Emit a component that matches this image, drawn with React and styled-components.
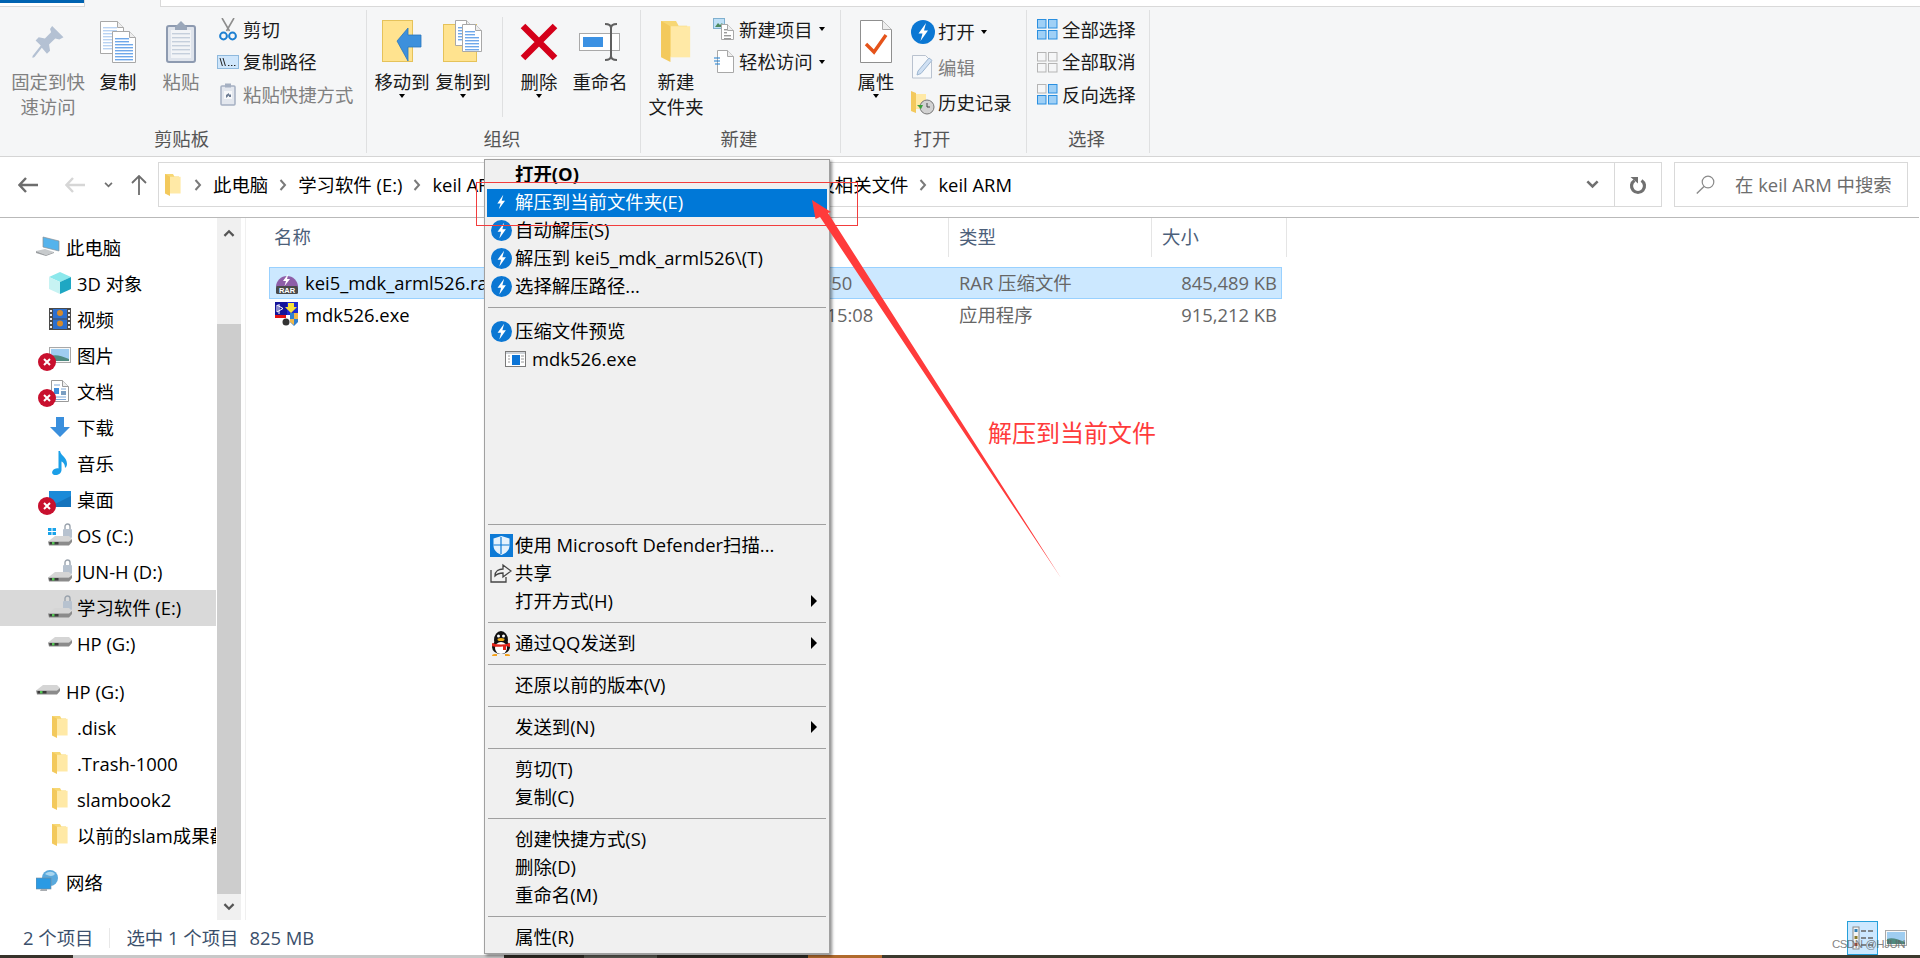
import React from 'react';
import styled, { createGlobalStyle } from 'styled-components';

const GlobalStyle = createGlobalStyle`
  html, body {
    margin: 0;
    padding: 0;
    background: #fff;
  }
  body {
    font-family: 'Open Sans', 'Noto Sans CJK SC', sans-serif;
    font-size: 18.4px;
    line-height: 25px;
    color: #000;
  }
`;

const Page = styled.div`
  position: relative;
  width: 1920px;
  height: 958px;
  overflow: hidden;
  display: flex;
  flex-direction: column;
`;

/* ribbon */
const TabStrip = styled.div`
  display: flex;
  height: 7px;
  flex: none;
`;
const FileTab = styled.div`
  width: 84px;
  border-top: 3px solid #0063b1;
  border-bottom: 1px solid #d9d9d9;
`;
const HomeTab = styled.div`
  width: 75px;
  background: #f5f6f7;
  border-right: 1px solid #d9d9d9;
  border-left: 1px solid #d9d9d9;
`;
const TabFill = styled.div`
  flex: 1;
  border-bottom: 1px solid #d9d9d9;
`;
const Ribbon = styled.div`
  display: flex;
  flex: none;
  height: 150px;
  padding-top: 3px;
  box-sizing: border-box;
  background: #f5f6f7;
  border-bottom: 1px solid #d5d5d5;
`;
const Group = styled.div`
  width: ${p => p.$width}px;
  height: 143px;
  flex: none;
  box-sizing: border-box;
  display: flex;
  flex-direction: column;
  border-right: 1px solid #dfe0e1;
`;
const GroupBody = styled.div`
  display: flex;
  flex: 1;
  min-height: 0;
  padding-left: ${p => p.$pad || 0}px;
`;
const GroupLabel = styled.div`
  height: 26px;
  flex: none;
  text-align: center;
  color: #555;
  line-height: 24px;
  padding-right: 3px;
`;
const LargeButton = styled.div`
  width: ${p => p.$width}px;
  flex: none;
  display: flex;
  flex-direction: column;
  align-items: center;
  padding-top: 10px;
  color: ${p => (p.$disabled ? '#808080' : '#1a1a1a')};
`;
const LargeIcon = styled.div`
  height: 43px;
  margin-bottom: 6px;
  display: flex;
  align-items: center;
  justify-content: center;
`;
const LargeText = styled.div`
  text-align: center;
  white-space: nowrap;
`;
const Caret = styled.span`
  display: block;
  width: 0;
  height: 0;
  border-left: 3.5px solid transparent;
  border-right: 3.5px solid transparent;
  border-top: 4px solid #000;
  margin-top: ${p => p.$top || 0}px;
  margin-left: ${p => p.$left || 0}px;
`;
const GroupRule = styled.div`
  width: 1px;
  height: 100px;
  margin: 7px 6px 0 7px;
  background: #dfe0e1;
`;
const SmallColumn = styled.div`
  margin-left: ${p => p.$left || 0}px;
  padding-top: ${p => p.$top || 3}px;
`;
const SmallRow = styled.div`
  height: ${p => p.$height || 32.5}px;
  display: flex;
  align-items: center;
  white-space: nowrap;
  color: ${p => (p.$disabled ? '#808080' : '#1a1a1a')};
`;
const SmallIcon = styled.span`
  width: 24px;
  margin-right: 3px;
  height: 24px;
  display: flex;
  align-items: center;
  justify-content: center;
  flex: none;
`;

/* address bar */
const AddressRow = styled.div`
  height: 61px;
  flex: none;
  box-sizing: border-box;
  display: flex;
  align-items: center;
  padding: 5px 0 10px;
  border-bottom: 1px solid #b9b9b9;
  margin-right: 1px;
`;
const NavButton = styled.div`
  width: ${p => p.$width}px;
  display: flex;
  justify-content: center;
  flex: none;
`;
const AddressBox = styled.div`
  width: 1504px;
  height: 45px;
  margin-left: 2px;
  box-sizing: border-box;
  border: 1px solid #d9d9d9;
  display: flex;
  align-items: center;
  padding-left: 4px;
`;
const CrumbIcon = styled.span`
  width: 20px;
  padding-left: 2px;
  box-sizing: border-box;
  display: flex;
  flex: none;
`;
const CrumbSep = styled.span`
  display: flex;
  margin: 0 11px;
`;
const LongCrumb = styled.span`
  display: flex;
  justify-content: space-between;
  width: 476px;
`;
const AddressEnd = styled.div`
  margin-left: auto;
  display: flex;
  align-items: center;
  height: 100%;
`;
const DropArrow = styled.span`
  display: flex;
  margin-right: 15px;
`;
const RefreshCell = styled.span`
  width: 46px;
  height: 100%;
  display: flex;
  align-items: center;
  justify-content: center;
  border-left: 1px solid #d9d9d9;
`;
const SearchBox = styled.div`
  width: 234px;
  height: 45px;
  margin-left: 12px;
  box-sizing: border-box;
  border: 1px solid #d9d9d9;
  display: flex;
  align-items: center;
  padding-left: 21px;
  color: #6d6d6d;
  white-space: nowrap;
`;
const SearchGlyph = styled.span`
  display: flex;
  width: 39px;
  flex: none;
`;

/* middle */
const Middle = styled.div`
  flex: 1;
  display: flex;
  min-height: 0;
`;
const Sidebar = styled.div`
  width: 217px;
  flex: none;
  padding-top: 12px;
  box-sizing: border-box;
  overflow: hidden;
`;
const TreeRow = styled.div`
  position: relative;
  height: 36px;
  width: 216px;
  box-sizing: border-box;
  display: flex;
  align-items: center;
  gap: ${p => (p.$top ? 6 : 5)}px;
  padding: 0 0 2px ${p => (p.$top ? 36 : 48)}px;
  margin-top: ${p => p.$gap || 0}px;
  background: ${p => (p.$active ? '#d9d9d9' : 'transparent')};
  white-space: nowrap;
  overflow: hidden;
`;
const TreeIcon = styled.span`
  width: 24px;
  height: 24px;
  display: flex;
  align-items: center;
  justify-content: center;
  flex: none;
`;
const ErrorBadge = styled.span`
  position: absolute;
  left: 38px;
  top: 15px;
  width: 18px;
  height: 18px;
  display: flex;
`;
const ScrollBar = styled.div`
  width: 24px;
  flex: none;
  display: flex;
  flex-direction: column;
  background: #f0f0f0;
`;
const ScrollEnd = styled.div`
  height: ${p => p.$height}px;
  flex: none;
  display: flex;
  justify-content: center;
  padding-top: ${p => p.$top}px;
  box-sizing: border-box;
`;
const ScrollThumb = styled.div`
  flex: 1;
  background: #cdcdcd;
`;
const PaneRule = styled.div`
  width: 1px;
  flex: none;
  margin-left: 4px;
  background: #f0f0f0;
`;
const FilePane = styled.div`
  flex: 1;
  padding-left: 23px;
  color: #666;
`;
const HeaderRow = styled.div`
  display: grid;
  grid-template-columns: 680px 203px 135px;
  height: 39px;
  color: #4c607a;
`;
const HeaderCell = styled.div`
  padding-left: ${p => p.$pad}px;
  padding-top: 6px;
  box-sizing: border-box;
  border-right: 1px solid #e5e5e5;
`;
const FileRow = styled.div`
  display: grid;
  grid-template-columns: 454px 225px 203px 130px;
  height: 32px;
  width: 1013px;
  box-sizing: border-box;
  padding-bottom: 2px;
  align-items: center;
  background: ${p => (p.$selected ? '#cce8ff' : 'transparent')};
  border: 1px solid ${p => (p.$selected ? '#99d1ff' : 'transparent')};
  margin-top: ${p => p.$gap || 0}px;
  white-space: nowrap;
`;
const NameCell = styled.div`
  display: flex;
  align-items: center;
  gap: 6px;
  padding-left: 5px;
  color: #000;
`;
const TypeCell = styled.div`
  padding-left: 10px;
`;
const SizeCell = styled.div`
  text-align: right;
  padding-right: 5px;
`;

/* status bar */
const StatusBar = styled.div`
  height: 35px;
  flex: none;
  display: flex;
  align-items: center;
  padding: 0 13px 0 23px;
  color: #3a4f6b;
  white-space: nowrap;
`;
const StatusRule = styled.span`
  width: 1px;
  height: 20px;
  background: #e8e8e8;
  margin: 0 16px;
`;
const StatusGap = styled.span`
  margin-left: 11px;
`;
const ViewActive = styled.div`
  margin-left: auto;
  width: 31px;
  height: 34px;
  box-sizing: border-box;
  background: #cce8ff;
  border: 1px solid #26a0da;
  display: flex;
  align-items: center;
  justify-content: center;
`;
const ViewPlain = styled.div`
  margin-left: 7px;
  display: flex;
`;
const DesktopStrip = styled.div`
  height: 3px;
  flex: none;
  display: flex;
`;
const StripPart = styled.div`
  width: ${p => p.$width}px;
  flex: ${p => (p.$width ? 'none' : 1)};
  background: ${p => p.$color};
`;

/* context menu */
const Menu = styled.div`
  position: absolute;
  left: 484px;
  top: 159px;
  width: 346px;
  height: 795px;
  box-sizing: border-box;
  padding: 1px 2px;
  background: #f0f0f0;
  border: 1px solid #a0a0a0;
  box-shadow: 2px 2px 3px rgba(0, 0, 0, 0.45);
`;
const MenuRow = styled.div`
  height: 28px;
  box-sizing: border-box;
  padding-bottom: 2px;
  display: flex;
  align-items: center;
  line-height: 26px;
  white-space: nowrap;
  background: ${p => (p.$active ? '#0078d7' : 'transparent')};
  color: ${p => (p.$active ? '#fff' : '#000')};
  font-weight: ${p => (p.$bold ? 700 : 400)};
`;
const MenuIcon = styled.span`
  width: 28px;
  height: 26px;
  flex: none;
  display: flex;
  align-items: center;
  justify-content: center;
`;
const SubIndent = styled.span`
  margin-left: ${p => p.$left}px;
  margin-right: 6px;
  display: flex;
`;
const SubArrow = styled.span`
  margin-left: auto;
  margin-right: 10px;
  width: 0;
  height: 0;
  border-top: 6px solid transparent;
  border-bottom: 6px solid transparent;
  border-left: 6px solid #000;
`;
const MenuRule = styled.div`
  height: 1px;
  margin: 6px 1px 7px;
  background: #a0a0a0;
`;
const MenuRuleTall = styled(MenuRule)`
  margin-bottom: 10px;
`;
const MenuSpacer = styled.div`
  height: 144px;
`;

/* annotations painted over the screenshot */
const RedBox = styled.div`
  position: absolute;
  left: 476px;
  top: 182px;
  width: 382px;
  height: 44px;
  box-sizing: border-box;
  border: 1px solid #f23d3d;
`;
const ArrowLayer = styled.svg`
  position: absolute;
  left: 0;
  top: 0;
  pointer-events: none;
`;
const Note = styled.div`
  position: absolute;
  left: 988px;
  top: 417px;
  font-size: 24px;
  line-height: 32px;
  color: #ff3b3b;
  white-space: nowrap;
`;
const Watermark = styled.div`
  position: absolute;
  right: 15px;
  top: 936px;
  font-family: 'Liberation Sans', sans-serif;
  font-size: 11.5px;
  line-height: 16px;
  letter-spacing: -0.5px;
  color: rgba(100, 100, 100, 0.8);
  white-space: nowrap;
`;

/* icons */
const Bolt = ({ size = 24, color = '#fff' }) => (
  <svg width={size} height={size} viewBox="0 0 24 24">
    <path d="M14.5 4 8 13.5h3.6L9.6 20 16.4 10.6h-3.7z" fill={color} />
  </svg>
);
const BoltCircle = ({ size = 21 }) => (
  <svg width={size} height={size} viewBox="0 0 24 24">
    <circle cx="12" cy="12" r="12" fill="#0b77d3" />
    <path d="M15 3 7.500 13.500h4L9.500 21 17 10.500h-4z" fill="#fff" />
  </svg>
);
const Sheet = ({ x, y, w, h, line = '#6fa8ea', rows = 0, stroke = '#a8a8a8', from = 5 }) => (
  <g>
    <path d={`M${x + 0.5} ${y + 0.5}h${w - 7}l6 6v${h - 7}h-${w - 1}z`} fill="#fff" stroke={stroke} />
    <path d={`M${x + w - 6.5} ${y + 0.5}v6h6`} fill="#eee" stroke={stroke} />
    {Array.from({ length: rows }, (_, i) => (
      <rect key={i} x={x + 3} y={y + from + i * 3} width={i < 2 ? w - 10 : w - 6} height="1.4" fill={line} />
    ))}
  </g>
);
const PinIcon = () => (
  <svg width="32" height="32" viewBox="0 0 30 31">
    <path d="M19 0 30 11l-4 2-4-1-6 6 1 6-3 3-5-6-7 9-2 1v-2l8-10-5-5 3-3 6 1 6-6-1-3z" fill="#b4c1d3" />
  </svg>
);
const CopyIcon = () => (
  <svg width="36" height="42" viewBox="0 0 36 42">
    <Sheet x={0} y={0} w={24} h={33} rows={8} from={6} line="#b9d3f3" />
    <Sheet x={12} y={10} w={24} h={32} rows={8} from={7} />
  </svg>
);
const PasteIcon = () => (
  <svg width="30" height="43" viewBox="0 0 30 43">
    <rect x="1" y="6" width="28" height="36" rx="2" fill="#dfe4ec" stroke="#8d9ab0" strokeWidth="2" />
    <rect x="5" y="10" width="20" height="28" fill="#f2f4f7" />
    {[13, 17, 21, 25, 29, 33].map(y => (
      <rect key={y} x="6" y={y} width="18" height="1.4" fill="#c5cfdc" />
    ))}
    <path d="M9 7l3-3 3-3 3 3 3 3v3H9z" fill="#9aa7ba" />
  </svg>
);
const ScissorsIcon = () => (
  <svg width="18" height="23" viewBox="0 0 18 23">
    <path d="M3 0l7.5 13M15 0 7.5 13" stroke="#8d8d8d" strokeWidth="1.6" fill="none" />
    <circle cx="4.5" cy="18" r="3.4" fill="none" stroke="#1d7fd1" strokeWidth="2" />
    <circle cx="13.5" cy="18" r="3.4" fill="none" stroke="#1d7fd1" strokeWidth="2" />
  </svg>
);
const CopyPathIcon = () => (
  <svg width="22" height="14" viewBox="0 0 22 14">
    <rect x="0.5" y="0.5" width="21" height="13" fill="#cfe6fb" stroke="#8fb9dd" />
    <path d="M3 3l2.4 8M6 3l2.4 8" stroke="#222" fill="none" />
    <path d="M11 10.5h1.4M14 10.5h1.4M17 10.5h1.4" stroke="#222" fill="none" />
  </svg>
);
const ShortcutIcon = () => (
  <svg width="16" height="23" viewBox="0 0 16 23">
    <rect x="1" y="3" width="14" height="19" rx="1" fill="#e3e7ee" stroke="#a5b0c2" strokeWidth="1.5" />
    <rect x="5" y="0.5" width="6" height="4" fill="#a5b0c2" />
    <rect x="4" y="8" width="8" height="8" fill="#f7f8fa" />
    <path d="M6 15v-3l3-2v1.4h2V14H9v-1.6z" fill="#6d7c93" />
  </svg>
);
const MoveToIcon = () => (
  <svg width="40" height="43" viewBox="0 0 40 43">
    <rect x="0.5" y="0.5" width="30" height="41" fill="#ffe38f" stroke="#e5c25a" />
    <path d="M15 20 26 7v7h13v12H26v14z" fill="#3d90dc" stroke="#2a76bd" strokeWidth="0.8" transform="translate(0 1)" />
  </svg>
);
const CopyToIcon = () => (
  <svg width="40" height="43" viewBox="0 0 40 43">
    <rect x="0.5" y="4.5" width="33" height="37" fill="#ffe38f" stroke="#e5c25a" />
    <Sheet x={12} y={0} w={18} h={26} rows={5} from={7} />
    <Sheet x={19} y={4} w={20} h={28} rows={7} from={7} />
  </svg>
);
const DeleteIcon = () => (
  <svg width="38" height="38" viewBox="0 0 38 38">
    <path d="M3 3l32 32M35 3 3 35" stroke="#d4001a" strokeWidth="6.5" fill="none" />
  </svg>
);
const RenameIcon = () => (
  <svg width="42" height="40" viewBox="0 0 42 40">
    <rect x="0.5" y="11.5" width="40" height="17" fill="#fff" stroke="#a9a9a9" />
    <rect x="4" y="15" width="20" height="10" fill="#3b91e3" />
    <path d="M26 2c4 0 6 1 6 4v28c0 3-2 4-6 4M38 2c-4 0-6 1-6 4v28c0 3 2 4 6 4" stroke="#606060" strokeWidth="2" fill="none" />
  </svg>
);
const FolderGlyph = ({ w = 16, h = 22 }) => (
  <svg width={w} height={h} viewBox="0 0 16 22">
    <path d="M0 0h8l1.4 2.6H14V19H0z" fill="#f7d774" />
    <path d="M5 2.8 15.6 2.8V19.5H5z" fill="#ffe9a6" />
    <path d="M0 0l5 2.8V22L0 19.5z" fill="#f3c95c" />
  </svg>
);
const NewItemIcon = () => (
  <svg width="22" height="22" viewBox="0 0 22 22">
    <rect x="0.5" y="0.5" width="11" height="10" fill="#bfe0f7" stroke="#7fb0cf" />
    <path d="M2 9l3-4 2 2 2-2 2 4z" fill="#4d8a5f" />
    <Sheet x={8} y={6} w={13} h={16} rows={4} from={5} line="#9a9a9a" />
  </svg>
);
const EasyAccessIcon = () => (
  <svg width="20" height="23" viewBox="0 0 20 23">
    <Sheet x={3} y={0} w={17} h={23} />
    <path d="M0 8h6M0 11h6M1 14h5" stroke="#1d7fd1" strokeWidth="1.2" />
  </svg>
);
const PropertiesIcon = () => (
  <svg width="32" height="43" viewBox="0 0 32 43">
    <path d="M.5.5h22l9 9v33H.5z" fill="#fff" stroke="#8f8f8f" />
    <path d="M22.5.5v9h9" fill="#eee" stroke="#a9a9a9" />
    <path d="M6 24l8 8L26 15" stroke="#e5531a" strokeWidth="3.4" fill="none" />
  </svg>
);
const EditIcon = () => (
  <svg width="22" height="24" viewBox="0 0 22 24">
    <path d="M.5.5h13l6 6v16.500H.5z" fill="#f7f9fb" stroke="#b9c2cf" />
    <path d="M5 20l1-4L17 3l3 2.400L9 18.500z" fill="#cfe0f3" stroke="#9db6d0" />
  </svg>
);
const HistoryIcon = () => (
  <svg width="24" height="24" viewBox="0 0 24 24">
    <path d="M0 0l5 2v20l-5-2z" fill="#f3c95c" />
    <path d="M5 3h10v15H5z" fill="#ffe9a6" />
    <circle cx="16" cy="16" r="7" fill="#d2d2d2" stroke="#777" />
    <path d="M16 12v4h3" stroke="#444" fill="none" />
    <path d="M6 14l4 4 2-4z" fill="#3aa13a" />
  </svg>
);
const SelectGrid = ({ cells, border }) => (
  <svg width="22" height="22" viewBox="0 0 22 22">
    {[[1, 1], [12, 1], [1, 12], [12, 12]].map(([x, y], i) => (
      <rect
        key={i}
        x={x + 0.5}
        y={y + 0.5}
        width="8.5"
        height="8.5"
        fill={cells[i] ? '#9fd0f6' : '#f5f6f7'}
        stroke={cells[i] ? border : '#b5b5b5'}
      />
    ))}
  </svg>
);
const ArrowLeft = ({ color }) => (
  <svg width="20" height="16" viewBox="0 0 20 16">
    <path d="M8 1 1.500 8 8 15M2 8h18" stroke={color} strokeWidth="2.4" fill="none" />
  </svg>
);
const Chevron = ({ color = '#707070', w = 10, h = 7, sw = 2 }) => (
  <svg width={w} height={h} viewBox="0 0 10 7">
    <path d="M1 1l4 4 4-4" stroke={color} strokeWidth={sw} fill="none" />
  </svg>
);
const CrumbChevron = () => (
  <svg width="8" height="12" viewBox="0 0 8 12">
    <path d="M1.500 1l4.500 5-4.500 5" stroke="#7a7a7a" strokeWidth="2" fill="none" />
  </svg>
);
const ArrowUp = () => (
  <svg width="16" height="20" viewBox="0 0 16 20">
    <path d="M1 8l7-7 7 7M8 1.500V20" stroke="#6d6d6d" strokeWidth="1.8" fill="none" />
  </svg>
);
const RefreshIcon = () => (
  <svg width="18" height="20" viewBox="0 0 18 20">
    <path d="M12.500 5.500a6.500 6.500 0 1 1-7 0" stroke="#707070" strokeWidth="3.200" fill="none" />
    <path d="M1.500 2h7.500v6.500z" fill="#707070" />
  </svg>
);
const SearchIcon = () => (
  <svg width="19" height="19" viewBox="0 0 19 19">
    <circle cx="12" cy="7" r="5.800" stroke="#8a8a8a" strokeWidth="1.200" fill="none" />
    <path d="M8 11.500.8 18.500" stroke="#8a8a8a" strokeWidth="1.400" />
  </svg>
);
const PcIcon = () => (
  <svg width="24" height="22" viewBox="0 0 24 22">
    <path d="M7 1l16 4v10L7 11z" fill="#55b3ec" stroke="#8b8f94" strokeWidth="0.7" />
    <path d="M0 15l9-2 9 3-8 3z" fill="#c7cacc" />
    <path d="M0 15v2l10 3 8-3v-1l-8 3z" fill="#9c9fa2" />
  </svg>
);
const CubeIcon = () => (
  <svg width="22" height="22" viewBox="0 0 22 22">
    <path d="M11 0l11 5-11 5L0 5z" fill="#8ce8ec" />
    <path d="M0 5l11 5v12L0 17z" fill="#c7f3f3" />
    <path d="M22 5 11 10v12l11-5z" fill="#1ea7c3" />
  </svg>
);
const VideoIcon = () => (
  <svg width="22" height="22" viewBox="0 0 22 22">
    <rect width="22" height="22" fill="#4a4a4a" />
    <rect x="4" y="1" width="14" height="9.500" fill="#2b6fcf" />
    <rect x="4" y="11.500" width="14" height="9.500" fill="#2b6fcf" />
    <circle cx="11" cy="5" r="3" fill="#d68a2a" />
    <circle cx="11" cy="15.500" r="3" fill="#d68a2a" />
    {[2, 6, 10, 14, 18].map(y => (
      <g key={y} fill="#eee">
        <rect x="1" y={y} width="2" height="2" />
        <rect x="19" y={y} width="2" height="2" />
      </g>
    ))}
  </svg>
);
const PictureIcon = () => (
  <svg width="22" height="16" viewBox="0 0 22 16">
    <rect x="0.500" y="0.500" width="21" height="15" fill="#f8f8f8" stroke="#a8a8a8" />
    <rect x="2" y="2" width="18" height="12" fill="#9fcdf0" />
    <path d="M2 9c5-2 10 0 18 3v2H2z" fill="#4f8a80" />
  </svg>
);
const DocIcon = () => (
  <svg width="18" height="22" viewBox="0 0 18 22">
    <Sheet x={0} y={0} w={18} h={22} stroke="#9a9a9a" />
    <path d="M3 5h6M10 9h5M3 17h12M3 19.500h12" stroke="#7fa8d8" />
    <rect x="3" y="8" width="5" height="6" fill="#3c8bd9" />
    <rect x="10" y="11" width="5" height="4" fill="#7a9ec2" />
  </svg>
);
const DownloadIcon = () => (
  <svg width="20" height="20" viewBox="0 0 20 20">
    <path d="M6 0h8v10h6L10 20 0 10h6z" fill="#3a8fdd" />
  </svg>
);
const MusicIcon = () => (
  <svg width="18" height="24" viewBox="0 0 18 24">
    <path d="M9 0c1 5 7 6 7 13 0 2-1 3-2 4 0-4-2-6-3.500-6.500V19c0 3-3 5-6 5-3 0-4-2-3-4 1-2 4-3 6-2.500V0z" fill="#1b9fe8" />
  </svg>
);
const DesktopIcon = () => (
  <svg width="22" height="16" viewBox="0 0 22 16">
    <rect width="22" height="16" fill="#1b8ad8" />
    <path d="M0 16 22 5v11z" fill="#1574bd" />
  </svg>
);
const DriveIcon = ({ lock, windows }) => (
  <svg width="24" height="24" viewBox="0 0 24 24">
    {windows && <path d="M0 5h3.500v3H0zM4.500 5H8v3H4.500zM0 9h3.500v3H0zM4.500 9H8v3H4.500z" fill="#19a3ea" />}
    {lock && (
      <g>
        <rect x="15" y="6" width="9" height="9" rx="1" fill="#b7c2cf" />
        <path d="M17 6V3.500a2.500 2.500 0 0 1 5 0V6" stroke="#9aa3ad" strokeWidth="1.400" fill="none" />
      </g>
    )}
    <path d="M7 13h14l3 3-3 2.500H0z" fill="#d5d5d5" />
    <path d="M0 18.500h21l3-2.500v3l-3 3.500H1z" fill="#8b8b8b" />
    <rect x="1.500" y="19" width="9" height="2.500" fill="#3a3a3a" />
    <rect x="4" y="19" width="2.500" height="2.500" fill="#54c454" />
  </svg>
);
const FlatDriveIcon = () => (
  <svg width="24" height="14" viewBox="0 0 24 14">
    <path d="M7 1h14l3 3-3 2.500H0z" fill="#d5d5d5" />
    <path d="M0 6.500h21l3-2.500v3l-3 3.500H1z" fill="#8b8b8b" />
    <rect x="1.500" y="7" width="9" height="2.500" fill="#3a3a3a" />
    <rect x="4" y="7" width="2.500" height="2.500" fill="#54c454" />
  </svg>
);
const NetworkIcon = () => (
  <svg width="24" height="24" viewBox="0 0 24 24">
    <circle cx="14" cy="8" r="8" fill="#5aa9dc" />
    <path d="M9 4c3-3 8-3 10 0-2 3-7 2-10 0z" fill="#a9d6ef" />
    <rect x="0" y="8" width="15" height="11" fill="#2a9ae4" stroke="#7a8b98" strokeWidth="0.600" />
    <path d="M5 19h6v2H4z" fill="#a8acb0" />
  </svg>
);
const CrossBadge = () => (
  <svg width="18" height="18" viewBox="0 0 18 18">
    <circle cx="9" cy="9" r="9" fill="#c8102e" />
    <path d="M6 6l6 6M12 6l-6 6" stroke="#fff" strokeWidth="2" />
  </svg>
);
const RarIcon = () => (
  <svg width="24" height="24" viewBox="0 0 24 24">
    <path d="M1 17a11 11 0 0 1 22 0z" fill="#8e5ea8" />
    <path d="M13.500 3.500 8 11h3l-1.500 5 5.500-7h-3z" fill="#fff" />
    <rect x="1" y="16" width="22" height="8" rx="1.500" fill="#4a4a4a" />
    <text x="12" y="23" textAnchor="middle" fontFamily="Liberation Sans, sans-serif" fontSize="7.500" fontWeight="700" fill="#fff">RAR</text>
  </svg>
);
const ExeIcon = () => (
  <svg width="24" height="24" viewBox="0 0 24 24">
    <rect x="0" y="0" width="12" height="13" fill="#14149a" />
    <rect x="12" y="0" width="11" height="13" fill="#1f2bd0" />
    <path d="M2 3l6 3.500L2 10zM4 2v10" stroke="#fff" fill="none" />
    <path d="M13 1h6v4h3l-6 6-6-6h3z" fill="#f6e23c" />
    <rect x="0" y="13" width="11" height="3" fill="#e31212" />
    <path d="M15 11h8v9l-4 4-4-4z" fill="#2f7fd0" />
    <path d="M19 11h4v6h-4zM15 17h4v6l-4-3z" fill="#f2b84a" />
    <circle cx="11" cy="20" r="3.500" fill="#333" />
  </svg>
);
const ShieldIcon = () => (
  <svg width="23" height="23" viewBox="0 0 23 23">
    <rect width="23" height="23" fill="#0d7ad6" />
    <path d="M11.500 2l8 2.500v7c0 5-4 8-8 9.500-4-1.500-8-4.500-8-9.500v-7z" fill="#e6f2fc" />
    <path d="M11 3v17M3.500 11h16" stroke="#0d7ad6" strokeWidth="1.200" />
  </svg>
);
const ShareIcon = () => (
  <svg width="22" height="20" viewBox="0 0 22 20">
    <path d="M1 7v12h15v-5" stroke="#444" strokeWidth="1.300" fill="none" />
    <path d="M5 13c0-5 4-7 8-7V2l8 6-8 6v-4c-3 0-6 1-8 3z" stroke="#444" strokeWidth="1.300" fill="#f0f0f0" />
  </svg>
);
const QqIcon = () => (
  <svg width="22" height="25" viewBox="0 0 22 25">
    <ellipse cx="11" cy="9" rx="7" ry="9" fill="#111" />
    <ellipse cx="11" cy="16" rx="9" ry="7" fill="#111" />
    <ellipse cx="11" cy="17" rx="6" ry="6" fill="#fff" />
    <path d="M2 12c6 2 12 2 18 0v4l-4-1v4h-3v-3.500C9 16 5 16 2 15z" fill="#e1251b" />
    <ellipse cx="11" cy="8.500" rx="3.500" ry="1.500" fill="#f5b21a" />
    <circle cx="8.500" cy="5" r="1.500" fill="#fff" />
    <circle cx="13.500" cy="5" r="1.500" fill="#fff" />
    <path d="M2 25c0-2 2-2 5-2v2zM20 25c0-2-2-2-5-2v2z" fill="#f5a11a" />
  </svg>
);
const WindowIcon = () => (
  <svg width="21" height="16" viewBox="0 0 21 16">
    <rect x="0.500" y="0.500" width="20" height="15" fill="#fff" stroke="#7a7a7a" />
    <rect x="1" y="1" width="19" height="2" fill="#cfd3d8" />
    <rect x="7" y="4" width="8" height="10" fill="#0b74d6" />
    <path d="M3 5h2M3 8h2M3 11h2M16 5h3M16 8h3M16 11h3" stroke="#9a9a9a" />
  </svg>
);
const DetailViewIcon = () => (
  <svg width="22" height="24" viewBox="0 0 22 24">
    <rect x="1" y="1" width="6" height="22" fill="#f4f4f4" stroke="#8a8a8a" />
    <rect x="2.500" y="3" width="3" height="3" fill="#2f7fb5" />
    <rect x="2.500" y="10" width="3" height="3" fill="#8a7a2a" />
    <rect x="2.500" y="17" width="3" height="3" fill="#a8402a" />
    <path d="M9 5h5M16 5h5M9 12h5M16 12h5M9 19h5M16 19h5" stroke="#666" strokeWidth="1.300" />
  </svg>
);
const SmallUp = () => (
  <svg width="12" height="8" viewBox="0 0 10 7">
    <path d="M1 6l4-4 4 4" stroke="#555" strokeWidth="2" fill="none" />
  </svg>
);

const treeRows = [
  { label: '此电脑', icon: <PcIcon />, top: true },
  { label: '3D 对象', icon: <CubeIcon /> },
  { label: '视频', icon: <VideoIcon /> },
  { label: '图片', icon: <PictureIcon />, error: true },
  { label: '文档', icon: <DocIcon />, error: true },
  { label: '下载', icon: <DownloadIcon /> },
  { label: '音乐', icon: <MusicIcon /> },
  { label: '桌面', icon: <DesktopIcon />, error: true },
  { label: 'OS (C:)', icon: <DriveIcon lock windows /> },
  { label: 'JUN-H (D:)', icon: <DriveIcon lock /> },
  { label: '学习软件 (E:)', icon: <DriveIcon lock />, active: true },
  { label: 'HP (G:)', icon: <FlatDriveIcon /> },
  { label: 'HP (G:)', icon: <FlatDriveIcon />, top: true, gap: 12 },
  { label: '.disk', icon: <FolderGlyph /> },
  { label: '.Trash-1000', icon: <FolderGlyph /> },
  { label: 'slambook2', icon: <FolderGlyph /> },
  { label: '以前的slam成果截图', icon: <FolderGlyph /> },
  { label: '网络', icon: <NetworkIcon />, top: true, gap: 11 },
];

export default function App() {
  return (
    <Page>
      <GlobalStyle />
      <TabStrip>
        <FileTab />
        <HomeTab />
        <TabFill />
      </TabStrip>

      <Ribbon>
        <Group $width={367}>
          <GroupBody $pad={8}>
            <LargeButton $width={80} $disabled>
              <LargeIcon><PinIcon /></LargeIcon>
              <LargeText>固定到快<br />速访问</LargeText>
            </LargeButton>
            <LargeButton $width={60}>
              <LargeIcon><CopyIcon /></LargeIcon>
              <LargeText>复制</LargeText>
            </LargeButton>
            <LargeButton $width={66} $disabled>
              <LargeIcon><PasteIcon /></LargeIcon>
              <LargeText>粘贴</LargeText>
            </LargeButton>
            <SmallColumn $left={2}>
              <SmallRow><SmallIcon><ScissorsIcon /></SmallIcon>剪切</SmallRow>
              <SmallRow><SmallIcon><CopyPathIcon /></SmallIcon>复制路径</SmallRow>
              <SmallRow $disabled><SmallIcon><ShortcutIcon /></SmallIcon>粘贴快捷方式</SmallRow>
            </SmallColumn>
          </GroupBody>
          <GroupLabel>剪贴板</GroupLabel>
        </Group>

        <Group $width={274}>
          <GroupBody $pad={6}>
            <LargeButton $width={58}>
              <LargeIcon><MoveToIcon /></LargeIcon>
              <LargeText>移动到</LargeText>
              <Caret />
            </LargeButton>
            <LargeButton $width={64}>
              <LargeIcon><CopyToIcon /></LargeIcon>
              <LargeText>复制到</LargeText>
              <Caret />
            </LargeButton>
            <GroupRule />
            <LargeButton $width={60}>
              <LargeIcon><DeleteIcon /></LargeIcon>
              <LargeText>删除</LargeText>
              <Caret />
            </LargeButton>
            <LargeButton $width={62}>
              <LargeIcon><RenameIcon /></LargeIcon>
              <LargeText>重命名</LargeText>
            </LargeButton>
          </GroupBody>
          <GroupLabel>组织</GroupLabel>
        </Group>

        <Group $width={200}>
          <GroupBody>
            <LargeButton $width={70}>
              <LargeIcon><FolderGlyph w={30} h={41} /></LargeIcon>
              <LargeText>新建<br />文件夹</LargeText>
            </LargeButton>
            <SmallColumn $left={1}>
              <SmallRow>
                <SmallIcon><NewItemIcon /></SmallIcon>新建项目<Caret $left={6} />
              </SmallRow>
              <SmallRow>
                <SmallIcon><EasyAccessIcon /></SmallIcon>轻松访问<Caret $left={6} />
              </SmallRow>
            </SmallColumn>
          </GroupBody>
          <GroupLabel>新建</GroupLabel>
        </Group>

        <Group $width={186}>
          <GroupBody $pad={5}>
            <LargeButton $width={60}>
              <LargeIcon><PropertiesIcon /></LargeIcon>
              <LargeText>属性</LargeText>
              <Caret />
            </LargeButton>
            <SmallColumn $left={5} $top={4}>
              <SmallRow $height={35.500}>
                <SmallIcon><BoltCircle size={24} /></SmallIcon>打开<Caret $left={6} />
              </SmallRow>
              <SmallRow $height={35.500} $disabled><SmallIcon><EditIcon /></SmallIcon>编辑</SmallRow>
              <SmallRow $height={35.500}><SmallIcon><HistoryIcon /></SmallIcon>历史记录</SmallRow>
            </SmallColumn>
          </GroupBody>
          <GroupLabel>打开</GroupLabel>
        </Group>

        <Group $width={123}>
          <GroupBody>
            <SmallColumn $left={8}>
              <SmallRow>
                <SmallIcon><SelectGrid cells={[1, 1, 1, 1]} border="#2a8fe0" /></SmallIcon>全部选择
              </SmallRow>
              <SmallRow>
                <SmallIcon><SelectGrid cells={[0, 0, 0, 0]} border="#b5b5b5" /></SmallIcon>全部取消
              </SmallRow>
              <SmallRow>
                <SmallIcon><SelectGrid cells={[0, 1, 1, 1]} border="#2a8fe0" /></SmallIcon>反向选择
              </SmallRow>
            </SmallColumn>
          </GroupBody>
          <GroupLabel>选择</GroupLabel>
        </Group>
      </Ribbon>

      <AddressRow>
        <NavButton $width={56}><ArrowLeft color="#6d6d6d" /></NavButton>
        <NavButton $width={38}><ArrowLeft color="#d6d6d6" /></NavButton>
        <NavButton $width={28}><Chevron w={9} h={6} /></NavButton>
        <NavButton $width={34}><ArrowUp /></NavButton>
        <AddressBox>
          <CrumbIcon><FolderGlyph w={16} h={22} /></CrumbIcon>
          <CrumbSep><CrumbChevron /></CrumbSep>
          此电脑
          <CrumbSep><CrumbChevron /></CrumbSep>
          学习软件 (E:)
          <CrumbSep><CrumbChevron /></CrumbSep>
          <LongCrumb><span>keil ARM</span><span>及相关文件</span></LongCrumb>
          <CrumbSep><CrumbChevron /></CrumbSep>
          keil ARM
          <AddressEnd>
            <DropArrow><Chevron w={13} h={9} /></DropArrow>
            <RefreshCell><RefreshIcon /></RefreshCell>
          </AddressEnd>
        </AddressBox>
        <SearchBox>
          <SearchGlyph><SearchIcon /></SearchGlyph>
          在 keil ARM 中搜索
        </SearchBox>
      </AddressRow>

      <Middle>
        <Sidebar>
          {treeRows.map((row, i) => (
            <TreeRow key={i} $top={row.top} $gap={row.gap} $active={row.active}>
              <TreeIcon>{row.icon}</TreeIcon>
              {row.label}
              {row.error && <ErrorBadge><CrossBadge /></ErrorBadge>}
            </TreeRow>
          ))}
        </Sidebar>
        <ScrollBar>
          <ScrollEnd $height={106} $top={11}><SmallUp /></ScrollEnd>
          <ScrollThumb />
          <ScrollEnd $height={26} $top={9}><Chevron w={12} h={8} color="#555" /></ScrollEnd>
        </ScrollBar>
        <PaneRule />
        <FilePane>
          <HeaderRow>
            <HeaderCell $pad={5}>名称</HeaderCell>
            <HeaderCell $pad={10}>类型</HeaderCell>
            <HeaderCell $pad={10}>大小</HeaderCell>
          </HeaderRow>
          <FileRow $selected $gap={10}>
            <NameCell><RarIcon />kei5_mdk_arml526.rar</NameCell>
            <div>2022/3/6 14:50</div>
            <TypeCell>RAR 压缩文件</TypeCell>
            <SizeCell>845,489 KB</SizeCell>
          </FileRow>
          <FileRow>
            <NameCell><ExeIcon />mdk526.exe</NameCell>
            <div>2022/10/16 15:08</div>
            <TypeCell>应用程序</TypeCell>
            <SizeCell>915,212 KB</SizeCell>
          </FileRow>
        </FilePane>
      </Middle>

      <StatusBar>
        2 个项目
        <StatusRule />
        选中 1 个项目
        <StatusGap>825 MB</StatusGap>
        <ViewActive><DetailViewIcon /></ViewActive>
        <ViewPlain><PictureIcon /></ViewPlain>
      </StatusBar>
      <DesktopStrip>
        <StripPart $width={73} $color="#37322a" />
        <StripPart $width={431} $color="#c8c8c8" />
        <StripPart $width={80} $color="#2f2b24" />
        <StripPart $width={73} $color="#57574f" />
        <StripPart $width={151} $color="#2f2b24" />
        <StripPart $width={74} $color="#b06a2c" />
        <StripPart $color="#3c3a2e" />
      </DesktopStrip>

      <Menu>
        <MenuRow $bold><MenuIcon />打开(O)</MenuRow>
        <MenuRow $active><MenuIcon><Bolt size={22} /></MenuIcon>解压到当前文件夹(E)</MenuRow>
        <MenuRow><MenuIcon><BoltCircle /></MenuIcon>自动解压(S)</MenuRow>
        <MenuRow><MenuIcon><BoltCircle /></MenuIcon>解压到 kei5_mdk_arml526\(T)</MenuRow>
        <MenuRow><MenuIcon><BoltCircle /></MenuIcon>选择解压路径...</MenuRow>
        <MenuRuleTall />
        <MenuRow><MenuIcon><BoltCircle /></MenuIcon>压缩文件预览</MenuRow>
        <MenuRow><SubIndent $left={18}><WindowIcon /></SubIndent>mdk526.exe</MenuRow>
        <MenuSpacer />
        <MenuRule />
        <MenuRow><MenuIcon><ShieldIcon /></MenuIcon>使用 Microsoft Defender扫描...</MenuRow>
        <MenuRow><MenuIcon><ShareIcon /></MenuIcon>共享</MenuRow>
        <MenuRow><MenuIcon />打开方式(H)<SubArrow /></MenuRow>
        <MenuRule />
        <MenuRow><MenuIcon><QqIcon /></MenuIcon>通过QQ发送到<SubArrow /></MenuRow>
        <MenuRule />
        <MenuRow><MenuIcon />还原以前的版本(V)</MenuRow>
        <MenuRule />
        <MenuRow><MenuIcon />发送到(N)<SubArrow /></MenuRow>
        <MenuRule />
        <MenuRow><MenuIcon />剪切(T)</MenuRow>
        <MenuRow><MenuIcon />复制(C)</MenuRow>
        <MenuRule />
        <MenuRow><MenuIcon />创建快捷方式(S)</MenuRow>
        <MenuRow><MenuIcon />删除(D)</MenuRow>
        <MenuRow><MenuIcon />重命名(M)</MenuRow>
        <MenuRule />
        <MenuRow><MenuIcon />属性(R)</MenuRow>
      </Menu>

      <RedBox />
      <ArrowLayer width="1920" height="958" viewBox="0 0 1920 958">
        <path d="M812 200 831 212 828 213 1061 578 820 217 815.500 219z" fill="#ff3b3b" />
      </ArrowLayer>
      <Note>解压到当前文件</Note>
      <Watermark>CSDN @HJUN</Watermark>
    </Page>
  );
}
